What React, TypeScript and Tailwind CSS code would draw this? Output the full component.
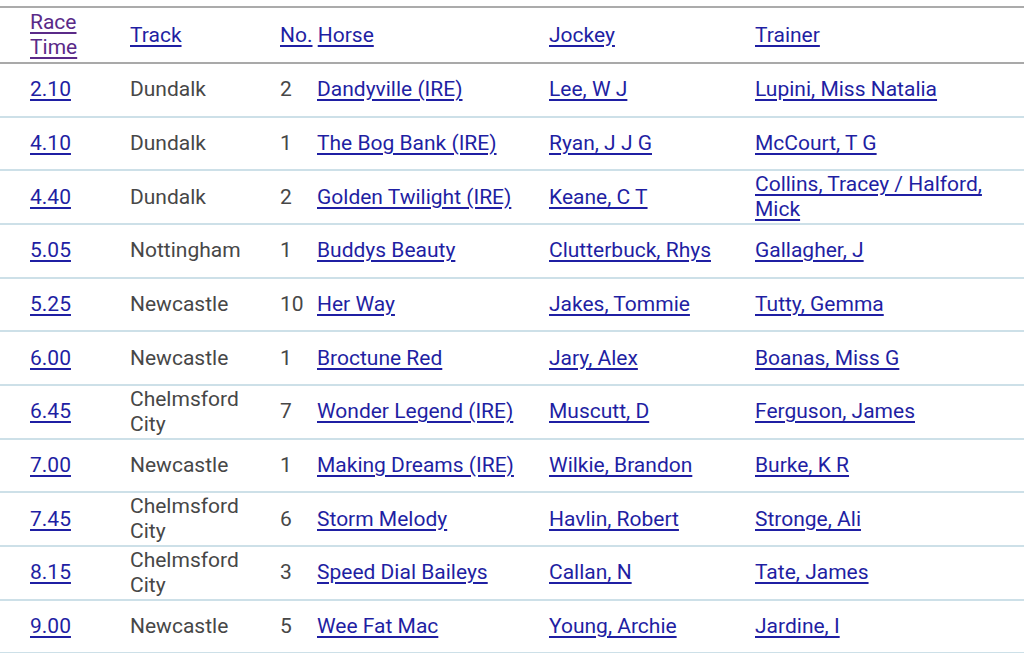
const RACES = [
  { time: "2.10", track: "Dundalk", no: "2", horse: "Dandyville (IRE)", jockey: "Lee, W J", trainer: "Lupini, Miss Natalia" },
  { time: "4.10", track: "Dundalk", no: "1", horse: "The Bog Bank (IRE)", jockey: "Ryan, J J G", trainer: "McCourt, T G" },
  { time: "4.40", track: "Dundalk", no: "2", horse: "Golden Twilight (IRE)", jockey: "Keane, C T", trainer: "Collins, Tracey / Halford, Mick" },
  { time: "5.05", track: "Nottingham", no: "1", horse: "Buddys Beauty", jockey: "Clutterbuck, Rhys", trainer: "Gallagher, J" },
  { time: "5.25", track: "Newcastle", no: "10", horse: "Her Way", jockey: "Jakes, Tommie", trainer: "Tutty, Gemma" },
  { time: "6.00", track: "Newcastle", no: "1", horse: "Broctune Red", jockey: "Jary, Alex", trainer: "Boanas, Miss G" },
  { time: "6.45", track: "Chelmsford City", no: "7", horse: "Wonder Legend (IRE)", jockey: "Muscutt, D", trainer: "Ferguson, James" },
  { time: "7.00", track: "Newcastle", no: "1", horse: "Making Dreams (IRE)", jockey: "Wilkie, Brandon", trainer: "Burke, K R" },
  { time: "7.45", track: "Chelmsford City", no: "6", horse: "Storm Melody", jockey: "Havlin, Robert", trainer: "Stronge, Ali" },
  { time: "8.15", track: "Chelmsford City", no: "3", horse: "Speed Dial Baileys", jockey: "Callan, N", trainer: "Tate, James" },
  { time: "9.00", track: "Newcastle", no: "5", horse: "Wee Fat Mac", jockey: "Young, Archie", trainer: "Jardine, I" },
];

const COLS = "grid grid-cols-[100px_150px_37px_232px_206px_1fr] items-center pl-[30px] pr-[30px]";

function Link({ children, visited }: { children: React.ReactNode; visited?: boolean }) {
  return (
    <a href="#" className={`underline underline-offset-[3px] ${visited ? "text-[#5a2a88]" : "text-[#1f1fa3]"}`}>
      {children}
    </a>
  );
}

export default function App() {
  return (
    <div className="bg-white pt-[6px] font-['Roboto',sans-serif] text-[21px] leading-[25px] text-[#474747]">
      <div className="border-t-2 border-[#ababab]">
        {/* header */}
        <div className={`${COLS} h-[56px] border-b-2 border-[#a9a9a9]`}>
          <div><Link visited>Race<br />Time</Link></div>
          <div><Link>Track</Link></div>
          <div className="col-span-2"><Link>No.</Link> <Link>Horse</Link></div>
          <div><Link>Jockey</Link></div>
          <div><Link>Trainer</Link></div>
        </div>

        {RACES.map((r) => (
          <div key={r.time} className={`${COLS} h-[53.67px] border-b-2 border-[#cde0e8]`}>
            <div><Link>{r.time}</Link></div>
            <div className="pr-[10px]">{r.track}</div>
            <div>{r.no}</div>
            <div><Link>{r.horse}</Link></div>
            <div><Link>{r.jockey}</Link></div>
            <div><Link>{r.trainer}</Link></div>
          </div>
        ))}
      </div>
    </div>
  );
}
